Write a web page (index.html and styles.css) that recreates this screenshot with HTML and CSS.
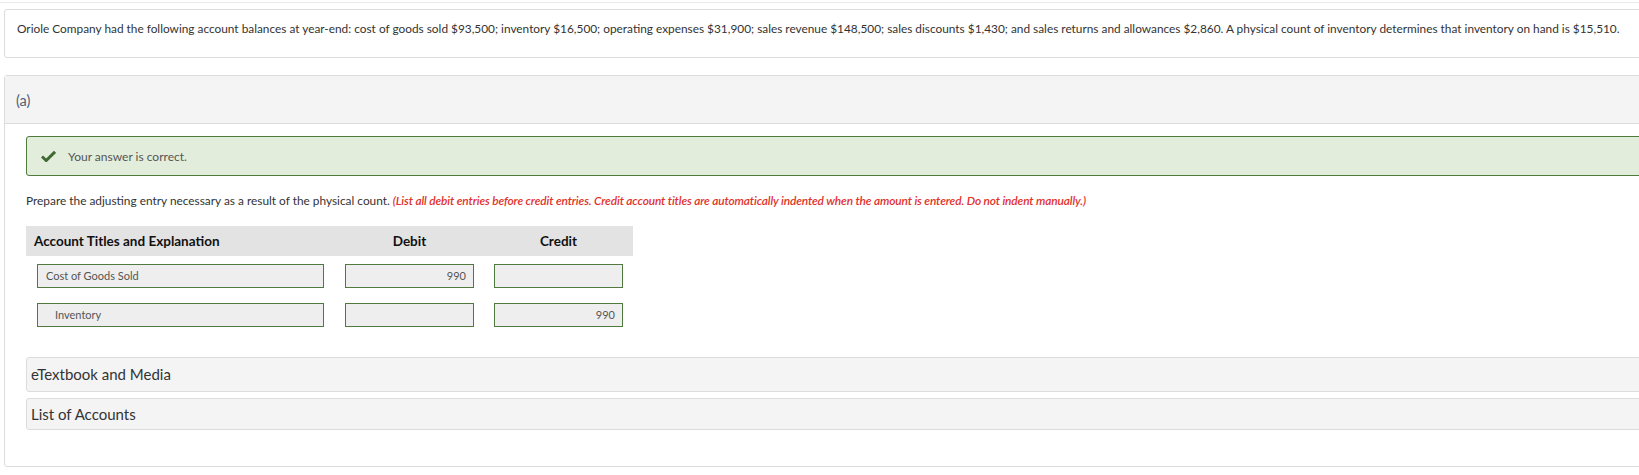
FILE: index.html
```html
<!DOCTYPE html>
<html>
<head>
<meta charset="utf-8">
<link rel="stylesheet" href="styles.css">
</head>
<body>
<div class="page">
  <div class="topline"></div>
  <div class="question">Oriole Company had the following account balances at year-end: cost of goods sold $93,500; inventory $16,500; operating expenses $31,900; sales revenue $148,500; sales discounts $1,430; and sales returns and allowances $2,860. A physical count of inventory determines that inventory on hand is $15,510.</div>
  <div class="part">
    <div class="part-head">(a)</div>
    <div class="part-body">
      <div class="alert">
        <svg class="check" width="15" height="12" viewBox="0 0 15 12"><path d="M1 6.5 L5.2 10.5 L14 1.8" fill="none" stroke="#3f6a32" stroke-width="3"/></svg>
        <span>Your answer is correct.</span>
      </div>
      <p class="prompt">Prepare the adjusting entry necessary as a result of the physical count. <em>(List all debit entries before credit entries. Credit account titles are automatically indented when the amount is entered. Do not indent manually.)</em></p>
      <div class="journal">
        <div class="jhead">
          <div class="h-acct">Account Titles and Explanation</div>
          <div class="h-amt">Debit</div>
          <div class="h-amt">Credit</div>
        </div>
        <div class="jrow">
          <div class="c-acct"><div class="field">Cost of Goods Sold</div></div>
          <div class="c-amt"><div class="field num">990</div></div>
          <div class="c-amt"><div class="field num"></div></div>
        </div>
        <div class="jrow">
          <div class="c-acct"><div class="field indent">Inventory</div></div>
          <div class="c-amt"><div class="field num"></div></div>
          <div class="c-amt"><div class="field num">990</div></div>
        </div>
      </div>
      <div class="bar tall">eTextbook and Media</div>
      <div class="bar">List of Accounts</div>
    </div>
  </div>
</div>
</body>
</html>
```

FILE: styles.css
```css
html, body {
  margin: 0;
  padding: 0;
  overflow: hidden;
  background: #fff;
}
body {
  font-family: Lato, "Open Sans", sans-serif;
  color: #333;
}
.page {
  width: 1700px;
  padding-left: 4px;
}
.topline {
  height: 2px;
  border-bottom: 1px solid #ececec;
  margin-bottom: 6px;
  margin-left: -4px;
}
.question {
  border: 1px solid #dcdcdc;
  border-radius: 3px;
  padding: 11px 12px 20px;
  font-size: 11.85px;
  line-height: 16px;
  white-space: nowrap;
  color: #333;
  margin-bottom: 17px;
}
.part {
  border: 1px solid #dcdcdc;
  border-radius: 3px;
  height: 392px;
  box-sizing: border-box;
}
.part-head {
  background: #f4f4f4;
  border-bottom: 1px solid #dcdcdc;
  padding: 17px 11px 14px;
  font-size: 14.5px;
  line-height: 16px;
  color: #4d5f78;
}
.part-body {
  padding: 12px 0 0 21px;
}
.alert {
  display: flex;
  align-items: center;
  height: 40px;
  box-sizing: border-box;
  border: 1px solid #4e7a3c;
  border-radius: 3px;
  background: #e2eedb;
  padding-left: 14px;
  font-size: 12px;
  color: #555;
}
.check {
  margin-right: 12px;
}
.prompt {
  margin: 17px 0 0;
  font-size: 11.87px;
  line-height: 16px;
  color: #333;
  white-space: nowrap;
}
.prompt em {
  color: #e2312b;
  font-weight: 600;
  letter-spacing: -0.12px;
}
.journal {
  width: 607px;
  margin-top: 17px;
}
.jhead, .jrow {
  display: grid;
  grid-template-columns: 309px 149px 149px;
}
.jhead {
  background: #e3e3e3;
  height: 30px;
  align-items: center;
  font-size: 13.5px;
  font-weight: 700;
  color: #111;
}
.h-acct {
  padding-left: 8px;
}
.h-amt {
  text-align: center;
}
.jrow {
  margin-top: 8px;
}
.jrow + .jrow {
  margin-top: 15px;
}
.c-acct {
  padding: 0 11px 0 11px;
}
.c-amt {
  padding: 0 10px;
}
.field {
  height: 24px;
  box-sizing: border-box;
  border: 1px solid #4f7a3f;
  background: #eeeeee;
  font-size: 11px;
  line-height: 22px;
  color: #555;
  padding: 0 7px 0 8px;
}
.field.indent {
  padding-left: 17px;
}
.field.num {
  text-align: right;
}
.bar {
  margin-top: 6px;
  height: 32px;
  box-sizing: border-box;
  border: 1px solid #dcdcdc;
  border-radius: 3px;
  background: #f4f4f4;
  padding-left: 4px;
  font-size: 15px;
  line-height: 30px;
  color: #333;
}
.bar.tall {
  margin-top: 30px;
  height: 35px;
  line-height: 33px;
}
```
